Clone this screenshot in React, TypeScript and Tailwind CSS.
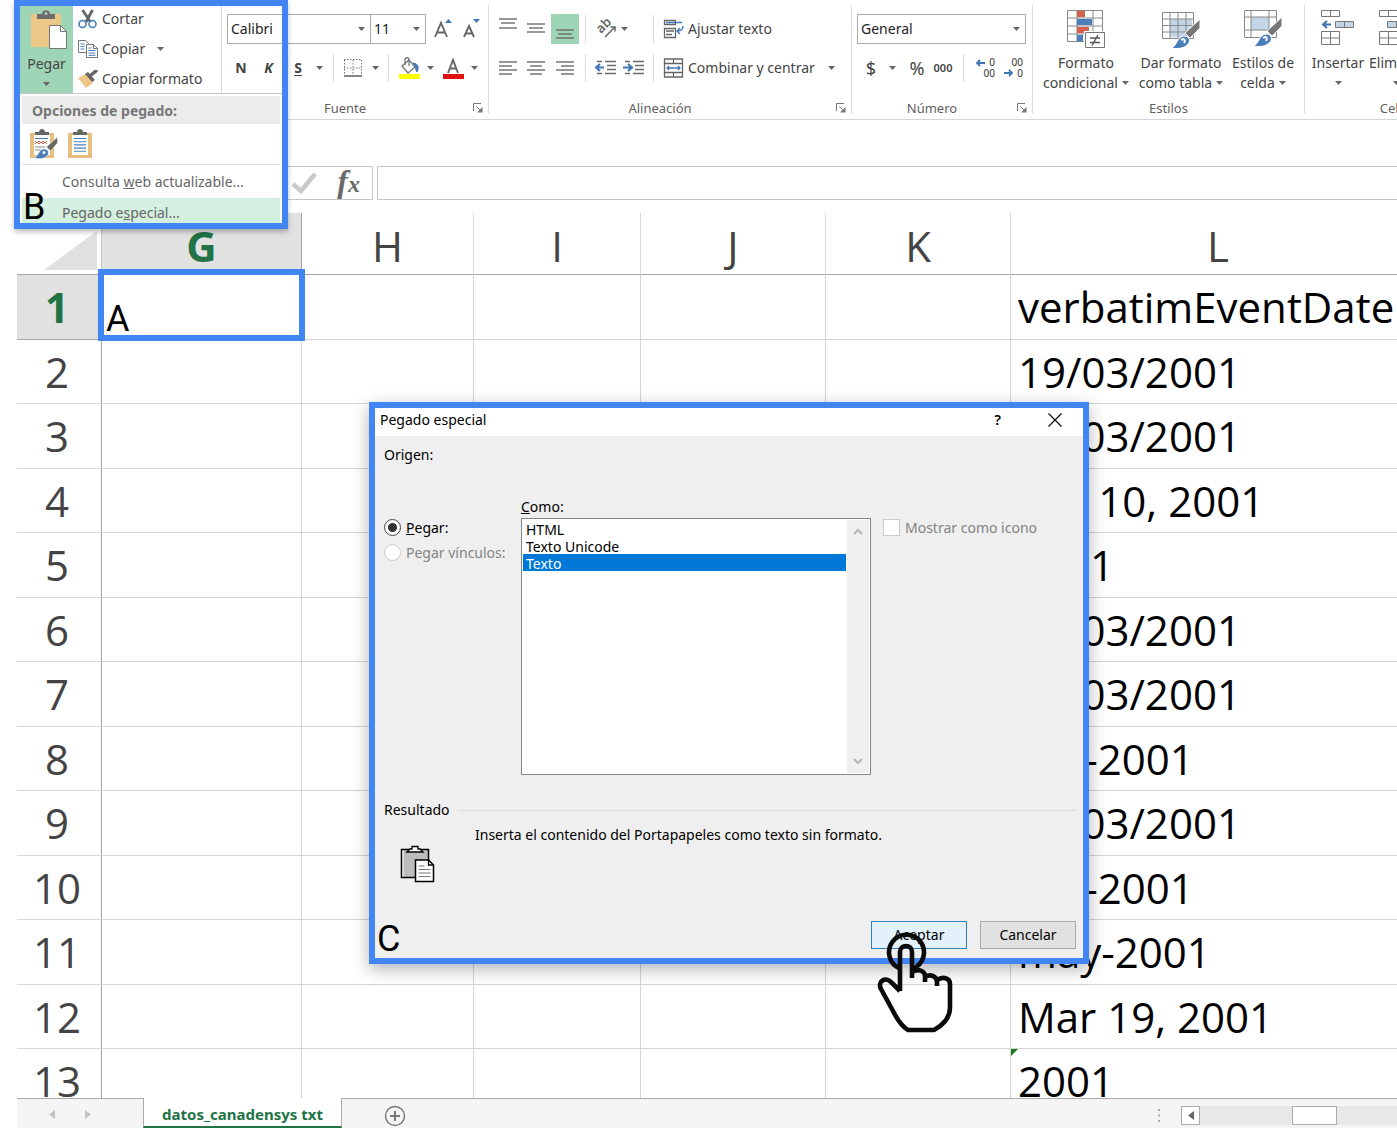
import React from "react";

type Kids = { children?: React.ReactNode };

const Caret = () => (
  <svg className="shrink-0" width="7" height="4" viewBox="0 0 7 4" aria-hidden="true">
    <path d="M0 0h7L3.5 4z" fill="#666" />
  </svg>
);

const Sep = ({ className = "" }: { className?: string }) => (
  <div className={`h-7 w-px shrink-0 bg-[#dcdcdc] ${className}`} />
);

const Tool = ({ label, className, children }: Kids & { label: string; className: string }) => (
  <button type="button" aria-label={label} className={`flex h-7 shrink-0 items-center justify-center ${className}`}>
    {children}
  </button>
);

const GroupLine = () => <div className="my-[5px] w-px shrink-0 bg-[#dcdcdc]" />;

const Group = ({ name, className, launcher, children }: Kids & { name: string; className: string; launcher?: boolean }) => (
  <section aria-label={name} className={`flex shrink-0 flex-col ${className}`}>
    {children}
    <div className="mt-auto flex h-[22px] items-center">
      <span className="flex-1 text-center text-[13px] text-[#5f5f5f]">{name}</span>
      {launcher && (
        <button type="button" aria-label={`Opciones de ${name}`} className="flex w-5 justify-center">
          <svg width="10" height="10" viewBox="0 0 10 10" fill="none" stroke="#777">
            <path d="M.5 8V.5H8M3.5 3.5L8 8" />
            <path d="M9.5 4v5.500H4z" fill="#777" stroke="none" />
          </svg>
        </button>
      )}
    </div>
  </section>
);

const Picker = ({ label, value, className }: { label: string; value: string; className: string }) => (
  <div className={`flex h-[30px] items-center border border-[#ababab] bg-white pr-[5px] ${className}`}>
    <select aria-label={label} className="min-w-0 flex-1 appearance-none bg-transparent pl-[3px] text-sm text-[#222] outline-none">
      <option>{value}</option>
    </select>
    <Caret />
  </div>
);

const Lines = ({ rows }: { rows: [number, number, number][] }) => (
  <svg width="20" height="28" viewBox="0 0 20 28" stroke="#6a6a6a" strokeWidth="1.400" aria-hidden="true">
    {rows.map(([y, a, b]) => (
      <path key={y} d={`M${a} ${y}H${b}`} />
    ))}
  </svg>
);

const PasteIcon = () => (
  <svg width="38" height="40" viewBox="0 0 38 40" aria-hidden="true">
    <path d="M1 4h30v33H1z" fill="#ecc785" />
    <path d="M7 9V4h5c0-5 8-5 8 0h5v5z" fill="#6d6d6d" />
    <circle cx="16" cy="3.500" r="1.500" fill="#a0d4b6" />
    <path d="M19.500 15.500h11l6 6V38.500h-17z" fill="#fff" stroke="#777" />
    <path d="M30.500 15.500v6h6" fill="none" stroke="#777" />
  </svg>
);

const Scissors = () => (
  <svg width="20" height="20" viewBox="0 0 20 20" fill="none" aria-hidden="true">
    <path d="M4.500 1l8 12M14.500 1L8 13" stroke="#666" strokeWidth="2.800" />
    <circle cx="4.500" cy="15" r="3.500" stroke="#4a7ebb" strokeWidth="1.600" />
    <circle cx="14.500" cy="15" r="3.500" stroke="#4a7ebb" strokeWidth="1.600" />
  </svg>
);

const CopyIcon = () => (
  <svg width="20" height="18" viewBox="0 0 20 18" fill="#fff" stroke="#777" aria-hidden="true">
    <path d="M.5.5h7l3 3v9H.5z" />
    <path d="M2.500 4h4M2.500 6.500h4M2.500 9h4" stroke="#4a7ebb" />
    <path d="M8.500 4.500h7l4 4v9h-11z" />
    <path d="M15.500 4.500v4h4" fill="none" />
    <path d="M10.500 8h3M10.500 10.500h7M10.500 13h7M10.500 15.300h7" stroke="#4a7ebb" />
  </svg>
);

const Painter = () => (
  <svg width="20" height="18" viewBox="0 0 20 18" aria-hidden="true">
    <path d="M0 8l8-4 7 9-7 5z" fill="#ecc785" />
    <path d="M7 4l3-2 7 8-3 2z" fill="#666" />
    <path d="M13 5l5-4" stroke="#666" strokeWidth="3.500" strokeLinecap="round" />
  </svg>
);

const Brush = () => (
  <>
    <path d="M35 7L20 21l5 5L35 16z" fill="#777" stroke="#fff" />
    <path d="M6 36c6-1 6-12 13-12 6 0 7 6 3 9-4 4-11 4-16 3z" fill="#4a7ebb" stroke="#fff" />
    <path d="M16 28c3-2 5 0 3 3" fill="none" stroke="#fff" strokeWidth="2" />
  </>
);

const ClipboardIcon = ({ brush }: { brush?: boolean }) => (
  <svg width="28" height="30" viewBox="0 0 28 30" aria-hidden="true">
    <path d="M0 4h24v25H0z" fill="#e6bf80" />
    <path d="M4 6h16v20H4z" fill="#fff" />
    <path d="M5 6V3h4c0-4 6-4 6 0h4v3z" fill="#666" />
    {brush ? (
      <>
        <path d="M5 9.500h13" stroke="#4a7ebb" />
        <path d="M5 12l2 2 2-2 2 2 2-2 2 2 2-2M5 15l2-2 2 2 2-2 2 2 2-2 2 2" stroke="#d65a47" fill="none" />
        <path d="M5 18h10M5 21h6" stroke="#888" />
        <path d="M27.500 8l-11 10 4 4 7-8z" fill="#666" stroke="#fff" strokeWidth=".5" />
        <path d="M4 29c4-1 5-9 10-9 5 0 6 5 2 8-3 2-8 2-12 1z" fill="#4a7ebb" stroke="#fff" strokeWidth=".5" />
        <circle cx="14" cy="23.500" r="1.500" fill="#fff" />
      </>
    ) : (
      <path d="M6 9.500h12M6 12.700h12M6 15.900h12M6 19.100h12M6 22.300h12" stroke="#4a7ebb" strokeWidth="1.100" />
    )}
  </svg>
);

const CellsIcon = ({ remove }: { remove?: boolean }) => (
  <svg width="36" height="38" viewBox="0 0 36 38" fill="#fff" stroke="#777" aria-hidden="true">
    <path d="M1.500 1.500h18v6h-18zM10.500 1.500v6M1.500 22.500h18v13h-18zM10.500 22.500v13M1.500 29h18" />
    <path d={remove ? "M9.500 12.500h18v6h-18zM18.500 12.500v6" : "M15.500 12.500h18v6h-18zM24.500 12.500v6"} fill="#c3d6e8" />
    {!remove && <path d="M11 15.500H4M7 12l-4 3.500L7 19" fill="none" stroke="#3f76b5" strokeWidth="2" />}
  </svg>
);

const BigButton = ({ icon, top, bottom, className }: { icon: React.ReactNode; top: string; bottom?: string; className: string }) => (
  <button type="button" className={`flex shrink-0 flex-col items-center whitespace-nowrap text-sm text-[#444] ${className}`}>
    <span className="flex h-[44px] items-start">{icon}</span>
    <span className="leading-5">{top}</span>
    <span className="flex h-5 items-center gap-1 leading-5">
      {bottom}
      <Caret />
    </span>
  </button>
);

const Decimals = ({ inc }: { inc?: boolean }) => (
  <div className="relative flex h-[22px] w-[22px] flex-col items-end text-[10px] leading-[11px] text-[#333]">
    <span>{inc ? "0" : "00"}</span>
    <span>{inc ? "00" : "0"}</span>
    <svg className={inc ? "absolute top-0.5 left-0.5" : "absolute bottom-0.5 left-0.5"} width="11" height="8" viewBox="0 0 11 8" aria-hidden="true">
      <path d={inc ? "M10 4H2M5 1L2 4l3 3" : "M1 4h8M6 1l3 3-3 3"} fill="none" stroke="#3f76b5" strokeWidth="1.800" />
    </svg>
  </div>
);

const Indent = ({ right }: { right?: boolean }) => (
  <svg width="22" height="16" viewBox="0 0 22 16" fill="none" aria-hidden="true">
    <path d="M2 1.500h5M2 13.500h5M10 1.500h11M12 5.500h9M12 9.500h9M10 13.500h11" stroke="#6a6a6a" strokeWidth="1.400" />
    <path d={right ? "M0 7.500h8M5 4l4 3.500L5 11" : "M9 7.500H1M5 4L1 7.500 5 11"} stroke="#3f76b5" strokeWidth="2.200" />
  </svg>
);

const Ribbon = () => (
  <header className="flex h-[120px] shrink-0 overflow-hidden border-b border-[#d5d5d5] text-sm text-[#444]">
    <section aria-label="Portapapeles" className="flex w-[204px] shrink-0">
      <button type="button" className="ml-[3px] flex h-[94px] w-[53px] flex-col items-center bg-[#9fd5b7] pt-2.5">
        <span className="ml-1"><PasteIcon /></span>
        <span className="mt-1 leading-5">Pegar</span>
        <span className="mt-2"><Caret /></span>
      </button>
      <div className="ml-[5px] flex flex-col pt-1">
        <button type="button" className="flex h-[30px] items-center gap-1"><Scissors />Cortar</button>
        <button type="button" className="flex h-[30px] items-center gap-1"><CopyIcon />Copiar<span className="ml-2"><Caret /></span></button>
        <button type="button" className="flex h-[30px] items-center gap-1 whitespace-nowrap"><Painter />Copiar formato</button>
      </div>
    </section>
    <GroupLine />
    <Group name="Fuente" className="w-[266px] pt-3.5" launcher>
      <div className="flex items-center pl-[5px]">
        <Picker label="Fuente" value="Calibri" className="w-[144px]" />
        <Picker label="Tamaño" value="11" className="-ml-px w-[56px]" />
        <Tool label="Aumentar" className="ml-1.5 w-6">
          <svg width="20" height="22" viewBox="0 0 20 22" fill="none">
            <path d="M1 19L7 5l6 14M3.500 14.500h7" stroke="#666" strokeWidth="1.900" />
            <path d="M11 5l3.500-4L18 5z" fill="#3f76b5" />
          </svg>
        </Tool>
        <Tool label="Reducir" className="ml-1 w-6">
          <svg width="18" height="22" viewBox="0 0 18 22" fill="none">
            <path d="M1 19L6 8l5 11M3 15.500h6" stroke="#666" strokeWidth="1.900" />
            <path d="M10 1h7l-3.500 4z" fill="#3f76b5" />
          </svg>
        </Tool>
      </div>
      <div className="mt-2.5 flex items-center pl-[5px]">
        <Tool label="Negrita" className="w-7"><b>N</b></Tool>
        <Tool label="Cursiva" className="w-[27px]"><b className="italic">K</b></Tool>
        <Tool label="Subrayado" className="w-8"><b className="underline underline-offset-2">S</b></Tool>
        <Tool label="Más subrayados" className="w-2.5"><Caret /></Tool>
        <Sep className="ml-[9px]" />
        <Tool label="Bordes" className="ml-2 w-[22px]">
          <svg width="18" height="18" viewBox="0 0 18 18" fill="none" stroke="#777">
            <path d="M.5 1v16M9 1v16M17.500 1v16M0 .5h18M0 9h18" strokeDasharray="1.500 1.500" />
            <path d="M0 17h18" strokeWidth="1.800" />
          </svg>
        </Tool>
        <Tool label="Más bordes" className="w-[22px]"><Caret /></Tool>
        <Sep className="ml-0.5" />
        <Tool label="Color de relleno" className="ml-2 w-6">
          <svg width="22" height="22" viewBox="0 0 22 22" fill="none">
            <path d="M4 9l7-6 6 7-7 6z" fill="#fff" stroke="#777" strokeWidth="1.300" />
            <path d="M7 8V3c0-3 4-3 4 0v6" stroke="#777" strokeWidth="1.300" />
            <path d="M15 6c6 1 6 5 4 9-2-3-1-6-4-9z" fill="#3f76b5" stroke="#3f76b5" />
            <path d="M1 17h21v5H1z" fill="#ff0" />
          </svg>
        </Tool>
        <Tool label="Más rellenos" className="w-[18px]"><Caret /></Tool>
        <Tool label="Color de fuente" className="w-7">
          <svg width="22" height="22" viewBox="0 0 22 22" fill="none">
            <path d="M6 16L11 3l5 13M8 11.500h6" stroke="#666" strokeWidth="1.900" />
            <path d="M1 17h21v5H1z" fill="#e31010" />
          </svg>
        </Tool>
        <Tool label="Más colores" className="w-3.5"><Caret /></Tool>
      </div>
    </Group>
    <GroupLine />
    <Group name="Alineación" className="w-[362px] pt-3.5" launcher>
      <div className="flex items-center pl-[5px]">
        <Tool label="Alinear arriba" className="w-7"><Lines rows={[[4, 1, 19], [8, 3, 17], [13, 1, 19]]} /></Tool>
        <Tool label="Alinear al medio" className="w-7"><Lines rows={[[9, 1, 19], [13, 3, 17], [17, 1, 19]]} /></Tool>
        <button type="button" aria-label="Alinear abajo" aria-pressed="true" className="ml-px flex h-[30px] w-7 items-center justify-center bg-[#9fd5b7]">
          <Lines rows={[[15, 1, 19], [19, 3, 17], [23, 1, 19]]} />
        </button>
        <Sep className="ml-1.5" />
        <Tool label="Orientación" className="ml-2 w-6">
          <svg width="24" height="26" viewBox="0 0 24 26" fill="none">
            <text transform="translate(7 18) rotate(-45)" fontFamily="Noto Sans, sans-serif" fontSize="13" fontWeight="600" fill="#666">ab</text>
            <path d="M11 21L21 11M16.500 11H21v4.500" stroke="#666" strokeWidth="1.500" />
          </svg>
        </Tool>
        <Tool label="Más orientaciones" className="w-3"><Caret /></Tool>
        <Sep className="ml-[23px]" />
        <button type="button" className="ml-[9px] flex h-7 items-center gap-[3px] whitespace-nowrap">
          <svg width="22" height="20" viewBox="0 0 22 20" fill="none" stroke="#666">
            <path d="M1.500 1.500h11v4h-11zM1.500 9.500h11v9h-11zM3 12h8M3 15.500h6" strokeWidth="1.300" />
            <path d="M3 3.500h16M20 7c0 4-2 5-6 5M17 9l-3 3 3 3" stroke="#3f76b5" strokeWidth="1.400" />
          </svg>
          Ajustar texto
        </button>
      </div>
      <div className="mt-2.5 flex items-center pl-[5px]">
        <Tool label="Izquierda" className="w-7"><Lines rows={[[8, 1, 19], [12, 1, 14], [16, 1, 19], [20, 1, 14]]} /></Tool>
        <Tool label="Centrar" className="w-7"><Lines rows={[[8, 1, 19], [12, 4, 16], [16, 1, 19], [20, 4, 16]]} /></Tool>
        <Tool label="Derecha" className="ml-px w-7"><Lines rows={[[8, 1, 19], [12, 6, 19], [16, 1, 19], [20, 6, 19]]} /></Tool>
        <Sep className="ml-1.5" />
        <Tool label="Disminuir sangría" className="ml-2 w-6"><Indent /></Tool>
        <Tool label="Aumentar sangría" className="ml-1 w-6"><Indent right /></Tool>
        <Sep className="ml-[7px]" />
        <button type="button" className="ml-[9px] flex h-7 items-center gap-[3px] whitespace-nowrap">
          <svg width="22" height="20" viewBox="0 0 22 20" fill="none" stroke="#666" strokeWidth="1.300">
            <path d="M1.500 1h18v18h-18zM1.500 5.500h18M1.500 14.500h18M10.500 1v4M10.500 15v4" />
            <path d="M4 10h13M6 8l-2 2 2 2M15 8l2 2-2 2" stroke="#3f76b5" />
          </svg>
          Combinar y centrar
          <span className="ml-2.5"><Caret /></span>
        </button>
      </div>
    </Group>
    <GroupLine />
    <Group name="Número" className="w-[180px] pt-3.5" launcher>
      <div className="flex pl-[5px]">
        <Picker label="Formato de número" value="General" className="w-[169px]" />
      </div>
      <div className="mt-2.5 flex items-center pl-[5px]">
        <Tool label="Moneda" className="w-7 text-lg">$</Tool>
        <Tool label="Más monedas" className="w-3.5"><Caret /></Tool>
        <Tool label="Porcentaje" className="ml-1 w-7 text-lg">%</Tool>
        <Tool label="Millares" className="w-6 text-[11px] font-semibold">000</Tool>
        <Sep className="ml-2" />
        <Tool label="Aumentar decimales" className="ml-2 w-6"><Decimals inc /></Tool>
        <Tool label="Disminuir decimales" className="ml-1 w-6"><Decimals /></Tool>
      </div>
    </Group>
    <GroupLine />
    <Group name="Estilos" className="w-[271px] pt-[9px]">
      <div className="flex pl-1">
        <BigButton
          className="w-[98px]"
          top="Formato"
          bottom="condicional"
          icon={
            <svg width="40" height="40" viewBox="0 0 40 40" fill="none">
              <path d="M1.500 1.500h35v31h-35zM11 1.500v31M27 1.500v31M1.500 9h35M1.500 17h35M1.500 25h35" stroke="#888" />
              <path d="M11 2h8v6h-8zM11 18h12v6H11z" fill="#d4614b" />
              <path d="M11 10h15v6H11zM11 26h6v6h-6z" fill="#4a7ebb" />
              <path d="M18 22h22v18H18z" fill="#fff" />
              <path d="M19.500 23.500h19v15h-19z" fill="#fff" stroke="#777" />
              <path d="M24 29h10M24 33.500h10M32 26l-6 10.500" stroke="#555" strokeWidth="1.500" />
            </svg>
          }
        />
        <BigButton
          className="w-[92px]"
          top="Dar formato"
          bottom="como tabla"
          icon={
            <svg width="40" height="41" viewBox="0 0 40 41" fill="none">
              <path d="M9 10h22v18H9z" fill="#c3d6e8" />
              <path d="M1.500 3.500h31v26h-31zM9 3.500v26M17 3.500v26M25 3.500v26M1.500 10h31M1.500 16.500h31M1.500 23h31" stroke="#888" />
              <g transform="translate(4 3)"><Brush /></g>
            </svg>
          }
        />
        <BigButton
          className="w-[72px]"
          top="Estilos de"
          bottom="celda"
          icon={
            <svg width="40" height="40" viewBox="0 0 40 40" fill="none">
              <path d="M8 8h18v13H8z" fill="#c3d6e8" />
              <path d="M1.500 1.500h32v27h-32zM8 1.500v27M26 1.500v27M1.500 8h32M1.500 21h32" stroke="#888" />
              <g transform="translate(4 1)"><Brush /></g>
            </svg>
          }
        />
      </div>
    </Group>
    <GroupLine />
    <Group name="Celdas" className="w-[190px] pt-[9px]">
      <div className="flex pl-1">
        <BigButton className="w-[58px]" top="Insertar" icon={<CellsIcon />} />
        <BigButton className="w-[58px]" top="Eliminar" icon={<CellsIcon remove />} />
        <BigButton className="w-[58px]" top="Formato" icon={<CellsIcon />} />
      </div>
    </Group>
  </header>
);

const FormulaBar = () => (
  <div className="mt-[46px] flex h-[34px] shrink-0 gap-1">
    <div className="flex w-[356px] items-center justify-end border border-[#c6c6c6] pr-3">
      <svg width="26" height="22" viewBox="0 0 26 22" aria-hidden="true">
        <path d="M2 12l8 7L24 2" fill="none" stroke="#c9c9c9" strokeWidth="4.500" />
      </svg>
      <button type="button" aria-label="Insertar función" className="ml-5 font-['Liberation_Serif',serif] text-[32px] leading-7 font-bold text-[#6a6a6a] italic">
        f<span className="text-2xl">x</span>
      </button>
    </div>
    <input aria-label="Barra de fórmulas" className="min-w-0 flex-1 border border-r-0 border-[#c6c6c6] outline-none" />
  </div>
);

const columns = ["G", "H", "I", "J", "K", "L"];
const dates = [
  "verbatimEventDate",
  "19/03/2001",
  "19/03/2001",
  "Abr 10, 2001",
  "2001",
  "19/03/2001",
  "19/03/2001",
  "abr-2001",
  "19/03/2001",
  "abr-2001",
  "may-2001",
  "Mar 19, 2001",
  "2001",
];

const Sheet = () => (
  <div className="mt-[13px] min-h-0 flex-1 overflow-hidden font-['Open_Sans','Noto_Sans',sans-serif]">
    <table className="w-full table-fixed border-separate border-spacing-0 text-[42px] leading-none">
      <colgroup>
        <col className="w-[85px]" />
        <col className="w-[200px]" />
        <col className="w-[172px]" />
        <col className="w-[167px]" />
        <col className="w-[185px]" />
        <col className="w-[185px]" />
        <col />
      </colgroup>
      <thead>
        <tr className="h-[62px]">
          <td className="border-r border-b border-r-[#c6c6c6] border-b-[#a6a6a6] p-0 align-bottom">
            <svg className="mb-1 ml-auto mr-1" width="53" height="39" viewBox="0 0 53 39" aria-hidden="true">
              <path d="M53 0v39H0z" fill="#e0e0e0" />
            </svg>
          </td>
          {columns.map((c) => (
            <th
              key={c}
              scope="col"
              className={
                c === "G"
                  ? "border-r border-b border-[#a6a6a6] bg-[#e1e1e1] p-0 pt-1 font-bold text-[#217346]"
                  : "border-r border-b border-r-[#d9d9d9] border-b-[#a6a6a6] p-0 pt-1 font-normal text-[#444] last:border-r-0 last:pl-7"
              }
            >
              {c}
            </th>
          ))}
        </tr>
      </thead>
      <tbody>
        {dates.map((d, i) => (
          <tr key={i} className="odd:h-[65px] even:h-16">
            <th
              scope="row"
              className={
                i === 0
                  ? "border-r border-b border-[#a6a6a6] bg-[#e1e1e1] p-0 pr-1 font-bold text-[#217346]"
                  : "border-r border-b border-r-[#a6a6a6] border-b-[#d9d9d9] p-0 pr-1 font-normal text-[#444]"
              }
            >
              {i + 1}
            </th>
            {columns.slice(0, 5).map((c) => (
              <td key={c} className="relative border-r border-b border-[#d4d4d4] p-0">
                {i === 0 && c === "G" && (
                  <span className="absolute -top-1.5 -right-1 -bottom-0.5 -left-1 z-10 flex items-end border-[6px] border-[#4285f4] bg-white pl-0.5 font-[Roboto,sans-serif] text-[36px] leading-8 text-black">
                    A
                  </span>
                )}
              </td>
            ))}
            <td className="relative border-b border-[#d4d4d4] p-0 pl-[7px] whitespace-nowrap text-black">
              {i === 12 && (
                <svg className="absolute top-0 left-0" width="7" height="7" viewBox="0 0 7 7" aria-hidden="true">
                  <path d="M0 0h7L0 7z" fill="#1a7a1a" />
                </svg>
              )}
              {d}
            </td>
          </tr>
        ))}
      </tbody>
    </table>
  </div>
);

const StatusBar = () => (
  <footer className="flex h-[30px] shrink-0 items-stretch bg-[#f5f5f5]">
    <div className="flex w-[126px] items-center gap-[30px] border-t border-[#ababab] pt-0.5 pl-8">
      <button type="button" aria-label="Hoja anterior">
        <svg width="6" height="9" viewBox="0 0 6 9"><path d="M6 0v9L0 4.500z" fill="#c3c3c3" /></svg>
      </button>
      <button type="button" aria-label="Hoja siguiente">
        <svg width="6" height="9" viewBox="0 0 6 9"><path d="M0 0v9l6-4.500z" fill="#c3c3c3" /></svg>
      </button>
    </div>
    <button type="button" className="w-[199px] border-x border-b-2 border-x-[#ababab] border-b-[#217346] bg-white pt-1 text-[15px] leading-5 font-bold whitespace-nowrap text-[#217346]">
      datos_canadensys txt
    </button>
    <div className="flex min-w-0 flex-1 items-center border-t border-[#ababab] pt-1 pl-[42px]">
      <button type="button" aria-label="Hoja nueva">
        <svg width="22" height="22" viewBox="0 0 22 22" fill="none" stroke="#777">
          <circle cx="11" cy="11" r="9.500" strokeWidth="1.400" />
          <path d="M11 6v10M6 11h10" strokeWidth="2" />
        </svg>
      </button>
      <svg className="ml-auto" width="3" height="14" viewBox="0 0 3 14" fill="#aaa" aria-hidden="true">
        <path d="M0 0h2v2H0zM0 5.500h2v2H0zM0 11h2v2H0z" />
      </svg>
      <div className="ml-5 flex h-[19px] w-[216px] bg-[#e8e8e8]">
        <button type="button" aria-label="Desplazar a la izquierda" className="flex w-[19px] items-center justify-center border border-[#ababab] bg-white">
          <svg width="6" height="9" viewBox="0 0 6 9"><path d="M6 0v9L0 4.500z" fill="#666" /></svg>
        </button>
        <div className="ml-[92px] w-[45px] border border-[#ababab] bg-white" />
      </div>
    </div>
  </footer>
);

const PasteMenu = () => (
  <div className="absolute top-0 left-[14px] z-20 flex h-[229px] w-[274px] flex-col border-[6px] border-[#4285f4] pt-[87px] text-sm text-[#666] shadow-[0_3px_5px_rgba(0,0,0,0.25)]">
    <div role="menu" className="flex flex-1 flex-col border-t border-[#c6c6c6] bg-white px-0.5 pt-0.5">
      <div className="h-7 bg-[#ececec] pt-px pl-2.5 leading-7 font-bold text-[#777]">Opciones de pegado:</div>
      <div className="flex h-[41px] items-center gap-2.5 border-b border-[#dcdcdc] pl-2">
        <button type="button" aria-label="Mantener formato"><ClipboardIcon brush /></button>
        <button type="button" aria-label="Pegar texto"><ClipboardIcon /></button>
      </div>
      <button type="button" role="menuitem" className="h-[33px] pl-10 text-left whitespace-nowrap">
        Consulta <u>w</u>eb actualizable...
      </button>
      <button type="button" role="menuitem" className="flex-1 bg-[#d3f0e0] pt-1 pl-10 text-left leading-5">
        Pegado e<u>s</u>pecial...
      </button>
    </div>
    <span className="absolute bottom-0 left-[3px] font-[Roboto,sans-serif] text-[36px] leading-8 text-black">B</span>
  </div>
);

const Chevron = ({ up }: { up?: boolean }) => (
  <svg width="10" height="8" viewBox="0 0 10 8" fill="none" stroke="#b5b5b5" strokeWidth="2" aria-hidden="true">
    <path d={up ? "M1 6l4-4 4 4" : "M1 2l4 4 4-4"} />
  </svg>
);

const Dialog = () => (
  <div
    role="dialog"
    aria-label="Pegado especial"
    className="absolute top-[402px] left-[369px] z-20 flex h-[562px] w-[720px] flex-col border-[6px] border-[#4285f4] bg-[#efefef] text-sm leading-4 text-black shadow-[0_5px_16px_rgba(0,0,0,0.3)]"
  >
    <div className="flex h-7 items-center bg-white pr-[21px] pl-[5px]">
      <h2 className="mb-1 flex-1">Pegado especial</h2>
      <button type="button" aria-label="Ayuda" className="mb-1 font-semibold">?</button>
      <button type="button" aria-label="Cerrar" className="mb-1 ml-[47px]">
        <svg width="14" height="14" viewBox="0 0 14 14" stroke="#111" strokeWidth="1.300"><path d="M.5.5l13 13M13.500.5l-13 13" /></svg>
      </button>
    </div>
    <p className="mt-[11px] ml-[9px]">Origen:</p>
    <div className="mt-9 ml-[9px] flex">
      <div className="w-[137px] pt-4 whitespace-nowrap">
        <label className="flex h-[25px] items-center gap-[5px]">
          <input
            type="radio"
            name="modo"
            defaultChecked
            className="h-[17px] w-[17px] shrink-0 appearance-none rounded-full border border-[#444] bg-white bg-[radial-gradient(circle,#333_4px,transparent_5px)]"
          />
          <span><u>P</u>egar:</span>
        </label>
        <label className="flex h-[25px] items-center gap-[5px] text-[#838383]">
          <input type="radio" name="modo" disabled className="h-[17px] w-[17px] shrink-0 appearance-none rounded-full border border-[#ccc] bg-white" />
          Pegar vínculos:
        </label>
      </div>
      <div className="w-[350px]">
        <label htmlFor="como" className="block h-[19px]"><u>C</u>omo:</label>
        <div className="flex h-[257px] border border-[#828790] bg-white p-px">
          <select
            id="como"
            size={15}
            defaultValue="Texto"
            className="h-full min-w-0 flex-1 appearance-none overflow-hidden bg-white outline-none"
          >
            {["HTML", "Texto Unicode", "Texto"].map((o) => (
              <option
                key={o}
                value={o}
                className="h-[17px] min-h-0 p-0 pl-[3px] leading-[17px] checked:bg-[#0078d7] checked:bg-[linear-gradient(#0078d7,#0078d7)] checked:text-white!"
              >
                {o}
              </option>
            ))}
          </select>
          <div className="ml-px flex w-[22px] flex-col items-center justify-between bg-[#f0f0f0] py-2">
            <Chevron up />
            <Chevron />
          </div>
        </div>
      </div>
      <label className="mt-5 ml-3 flex h-[17px] items-center gap-[5px] self-start whitespace-nowrap text-[#838383]">
        <input type="checkbox" disabled className="h-[17px] w-[17px] appearance-none border border-[#ccc] bg-white" />
        Mostrar como icono
      </label>
    </div>
    <div className="mt-[27px] mr-[7px] ml-[9px] flex items-center gap-2">
      <h3>Resultado</h3>
      <div className="h-px flex-1 bg-[#dcdcdc]" />
    </div>
    <div className="ml-[25px] flex">
      <svg className="mt-[27px]" width="36" height="38" viewBox="0 0 36 38" aria-hidden="true">
        <path d="M1.500 4.500h27v28h-27z" fill="#bdbdbd" stroke="#000" strokeWidth="1.500" />
        <path d="M3 5.500v26" stroke="#fff" />
        <path d="M7 7l3-3h2V1.500h6V4h2l3 3z" fill="#fff" stroke="#000" strokeWidth="1.300" />
        <path d="M15.500 15h13l5 5v16.500h-18z" fill="#fff" stroke="#000" strokeWidth="1.500" />
        <path d="M28.500 15v5h5" fill="none" stroke="#000" strokeWidth="1.300" />
        <path d="M18.500 21h6M18.500 24.500h12M18.500 28h12M18.500 31.500h12" stroke="#777" />
      </svg>
      <p className="mt-[9px] ml-[39px]">Inserta el contenido del Portapapeles como texto sin formato.</p>
    </div>
    <div className="mt-auto flex items-end justify-end gap-[13px] pr-[7px] pb-[9px]">
      <span className="mr-auto pl-0.5 font-[Roboto,sans-serif] text-[36px] leading-5">C</span>
      <button type="button" className="h-7 w-24 border border-[#2f7fb8] bg-[#e2f1fb]">Aceptar</button>
      <button type="button" className="h-7 w-24 border border-[#ababab] bg-[#e1e1e1]">Cancelar</button>
    </div>
  </div>
);

const HandPointer = () => (
  <svg
    className="pointer-events-none absolute top-[930px] left-[874px] z-30"
    width="84"
    height="106"
    viewBox="874 930 84 106"
    fill="none"
    stroke="#0a0a0a"
    strokeWidth="4.600"
    strokeLinejoin="round"
    aria-hidden="true"
  >
    <path d="M900 968.500a17.500 17.500 0 1 1 13 0" />
    <path
      d="M900 991V952c0-8 12-8 12 0v26M912 972c6-4 13-1 13 4v6M925 977c6-4 12 0 12 5v4M937 980c6-4 13-2 13 4v24c0 10-8 18-16 22h-26c-7-4-11-11-15-19l-12-22c-4-8 5-13 11-6l8 8"
    />
  </svg>
);

export default function App() {
  return (
    <main className="relative flex h-screen flex-col overflow-hidden bg-white pl-[17px] font-['Noto_Sans','Open_Sans',sans-serif]">
      <Ribbon />
      <FormulaBar />
      <Sheet />
      <StatusBar />
      <PasteMenu />
      <Dialog />
      <HandPointer />
    </main>
  );
}
